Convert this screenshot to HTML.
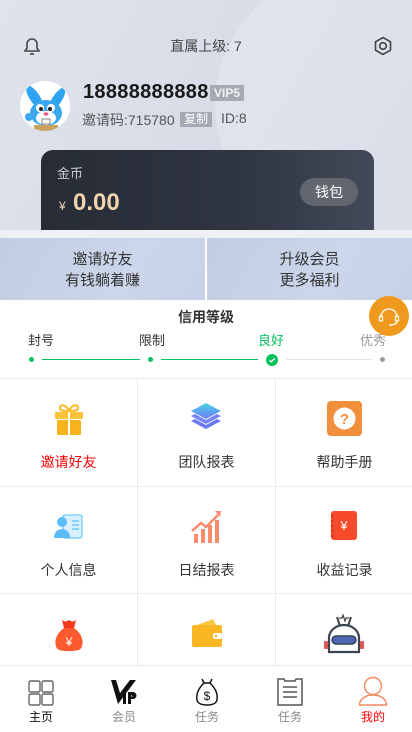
<!DOCTYPE html>
<html><head><meta charset="utf-8"><style>
*{margin:0;padding:0;box-sizing:border-box}
body{width:412px;height:732px;overflow:hidden;position:relative;background:#fff;font-family:"Liberation Sans","Noto Sans CJK SC",sans-serif;color:#333}
.a{position:absolute}
.hdr{left:0;top:0;width:412px;height:238px;background:linear-gradient(120deg,#dfe3ec 0%,#d6dbe6 60%,#cfd5e1 100%);overflow:hidden}
.hdr:after{content:"";position:absolute;left:215px;top:-60px;width:420px;height:330px;border-radius:50%;background:rgba(255,255,255,.22)}
.card{left:41px;top:150px;width:333px;height:82px;border-radius:12px 12px 0 0;background:linear-gradient(90deg,#272c36,#2f3541 60%,#424a59)}
.ban{top:238px;height:62px;width:205px;background:linear-gradient(120deg,#c3cde2,#ccd6ea 60%,#c6d1e8);text-align:center;font-size:15px;line-height:21px;color:#333;padding-top:11px}
.cell{position:absolute;width:137px;text-align:center;font-size:14px;color:#333}
.hl{position:absolute;left:0;width:412px;height:1px;background:#ebebeb}
.vl{position:absolute;top:378px;width:1px;height:287px;background:#ebebeb}
.tab{position:absolute;top:672px;width:60px;text-align:center;font-size:12px}
</style></head><body>
<div class="a hdr"></div>
<!-- bell -->
<svg class="a" style="left:21px;top:35px" width="22" height="22" viewBox="0 0 22 22" fill="none" stroke="#444" stroke-width="1.6"><path d="M4 16h14l-2-3V9a5 5 0 0 0-10 0v4z"/><path d="M9 19h4"/></svg>
<div class="a" style="left:0;width:412px;top:36px;text-align:center;font-size:14px;color:#444">直属上级: 7</div>
<svg class="a" style="left:372px;top:35px" width="22" height="22" viewBox="0 0 22 22" fill="none" stroke="#444" stroke-width="1.6"><path d="M11 2.5l7.5 4.3v8.4L11 19.5 3.5 15.2V6.8z"/><circle cx="11" cy="11" r="3.3"/></svg>
<!-- avatar -->
<div class="a" style="left:20px;top:81px;width:50px;height:50px;border-radius:50%;background:#fff;overflow:hidden">
<svg width="50" height="50" viewBox="0 0 50 50"><path d="M8 4c6 2 12 10 14 16L14 24C8 16 4 10 8 4z" fill="#2ea3f2"/><path d="M44 6c-6 2-12 10-14 16l8 3c6-8 9-14 6-19z" fill="#2ea3f2"/><ellipse cx="26" cy="32" rx="16" ry="13" fill="#3aa7ef"/><ellipse cx="26" cy="37" rx="10" ry="7" fill="#fff"/><circle cx="20" cy="27" r="4" fill="#fff"/><circle cx="31" cy="27" r="4" fill="#fff"/><circle cx="21" cy="28" r="2" fill="#222"/><circle cx="30" cy="28" r="2" fill="#222"/><ellipse cx="26" cy="33" rx="2.5" ry="1.8" fill="#e75b7f"/><rect x="22" y="38" width="8" height="5" fill="#fff" stroke="#333" stroke-width=".6"/><path d="M14 44h24v6H14z" fill="#c9a25d"/><circle cx="9" cy="36" r="4" fill="#3aa7ef"/></svg></div>
<div class="a" style="left:83px;top:81px;font-size:20px;font-weight:bold;color:#1a1a1a;letter-spacing:.3px">18888888888</div>
<div class="a" style="left:210px;top:85px;width:34px;height:16px;background:#a4a9b3;color:#f3f3f3;font-size:12px;font-weight:bold;text-align:center;line-height:16px">VIP5</div>
<div class="a" style="left:82px;top:110px;font-size:14px;color:#555">邀请码:715780</div>
<div class="a" style="left:180px;top:112px;width:32px;height:15px;background:#a4a9b3;color:#fff;font-size:12px;text-align:center;line-height:15px">复制</div>
<div class="a" style="left:221px;top:110px;font-size:14px;color:#555">ID:8</div>
<div class="a card"></div>
<div class="a" style="left:57px;top:163px;font-size:13px;color:#c8cad0">金币</div>
<div class="a" style="left:59px;top:199px;font-size:12px;color:#f2d3b0">¥</div>
<div class="a" style="left:73px;top:189px;font-size:24px;font-weight:bold;color:#f2d3b0">0.00</div>
<div class="a" style="left:300px;top:178px;width:58px;height:28px;border-radius:14px;background:#62666f;color:#fff;font-size:14px;text-align:center;line-height:28px">钱包</div>
<div class="a" style="left:0;top:230px;width:412px;height:8px;background:#eef0f3"></div>
<div class="a ban" style="left:0">邀请好友<br>有钱躺着赚</div>
<div class="a ban" style="left:207px">升级会员<br>更多福利</div>
<!-- credit -->
<div class="a" style="left:0;width:412px;top:307px;text-align:center;font-size:14px;font-weight:bold;color:#333">信用等级</div>
<div class="a" style="left:28px;top:330px;font-size:13px;color:#333">封号</div>
<div class="a" style="left:139px;top:330px;font-size:13px;color:#333">限制</div>
<div class="a" style="left:258px;top:330px;font-size:13px;color:#07c160">良好</div>
<div class="a" style="left:360px;top:330px;font-size:13px;color:#999">优秀</div>
<div class="a" style="left:29px;top:357px;width:5px;height:5px;border-radius:50%;background:#07c160"></div>
<div class="a" style="left:42px;top:359px;width:98px;height:1px;background:#07c160"></div>
<div class="a" style="left:148px;top:357px;width:5px;height:5px;border-radius:50%;background:#07c160"></div>
<div class="a" style="left:161px;top:359px;width:97px;height:1px;background:#07c160"></div>
<svg class="a" style="left:266px;top:354px" width="12" height="12" viewBox="0 0 12 12"><circle cx="6" cy="6" r="6" fill="#07c160"/><path d="M3.5 6.2l1.8 1.6 3.3-3.3" stroke="#fff" stroke-width="1.3" fill="none"/></svg>
<div class="a" style="left:286px;top:359px;width:86px;height:1px;background:#e5e5e5"></div>
<div class="a" style="left:380px;top:357px;width:5px;height:5px;border-radius:50%;background:#999"></div>
<div class="a" style="left:369px;top:296px;width:40px;height:40px;border-radius:50%;background:#ef9a1e"></div>
<svg class="a" style="left:377px;top:304px" width="24" height="24" viewBox="0 0 24 24" fill="none" stroke="#fff" stroke-width="1.3"><path d="M4 13a8 8 0 0 1 16 0"/><rect x="2.5" y="12" width="3" height="5" rx="1"/><rect x="18.5" y="12" width="3" height="5" rx="1"/><path d="M20 17c0 3-4 4-8 4"/></svg>
<!-- grid -->
<div class="hl" style="top:378px"></div><div class="hl" style="top:486px"></div><div class="hl" style="top:593px"></div><div class="hl" style="top:665px"></div>
<div class="vl" style="left:137px"></div><div class="vl" style="left:275px"></div>
<svg class="a" style="left:53px;top:402px" width="32" height="34" viewBox="0 0 32 34"><path d="M16 9c-3-7-9-7-9-3 0 3 5 3 9 3zm0 0c3-7 9-7 9-3 0 3-5 3-9 3z" fill="none" stroke="#fbbf34" stroke-width="2.2"/><rect x="2" y="10" width="28" height="7" rx="1.5" fill="#fbc23a"/><rect x="4" y="18" width="24" height="15" rx="1.5" fill="#f8b31c"/><rect x="15" y="10" width="2" height="23" fill="#fff"/></svg>
<svg class="a" style="left:189px;top:400px" width="34" height="36" viewBox="0 0 34 36"><defs><linearGradient id="g1" x1="0" y1="0" x2="0" y2="1"><stop offset="0" stop-color="#4dd2e8"/><stop offset="1" stop-color="#6a7cf5"/></linearGradient></defs><path d="M17 24L2 16l4-2 11 6 11-6 4 2z" fill="#7384f6"/><path d="M17 29L2 21l4-2 11 6 11-6 4 2z" fill="#6a78f5"/><path d="M17 19L2 11 17 3l15 8z" fill="url(#g1)"/></svg>
<svg class="a" style="left:327px;top:401px" width="35" height="35" viewBox="0 0 35 35"><rect x="0" y="0" width="35" height="35" rx="4" fill="#f28f3b"/><circle cx="17.5" cy="17.5" r="11" fill="#fff"/><text x="17.5" y="23" text-anchor="middle" font-size="15" font-weight="bold" fill="#f28f3b" font-family="Liberation Sans">?</text></svg>
<div class="cell" style="left:0;top:452px;color:#f00">邀请好友</div>
<div class="cell" style="left:138px;top:452px">团队报表</div>
<div class="cell" style="left:276px;top:452px">帮助手册</div>
<svg class="a" style="left:54px;top:514px" width="29" height="25" viewBox="0 0 29 25"><rect x="9" y="1" width="19" height="23" rx="2" fill="#d7efff" stroke="#6bc6fb" stroke-width="1.2"/><path d="M18 7h7M18 11h7M18 15h7" stroke="#6bc6fb" stroke-width="1.5"/><circle cx="8" cy="8" r="5" fill="#5bbcf8"/><path d="M0 24c0-6 4-9 8-9s8 3 8 9z" fill="#5bbcf8"/></svg>
<svg class="a" style="left:191px;top:509px" width="32" height="34" viewBox="0 0 32 34"><g fill="#fb8a6a"><rect x="3" y="25" width="4" height="9"/><rect x="10" y="20" width="4" height="14"/><rect x="17" y="16" width="4" height="18"/><rect x="24" y="11" width="4" height="23"/></g><path d="M1 22l9-8 5 4 12-12" stroke="#fb8a6a" stroke-width="2.4" fill="none"/><path d="M24 2l6 0-1 6z" fill="#fb8a6a"/></svg>
<svg class="a" style="left:330px;top:511px" width="27" height="30" viewBox="0 0 27 30"><rect x="1" y="0" width="26" height="29" rx="3" fill="#f64a2a"/><path d="M1 5h2M1 10h2M1 15h2M1 20h2M1 25h2" stroke="#c22" stroke-width="1.5"/><text x="14" y="19" text-anchor="middle" font-size="13" fill="#fff" font-family="Liberation Sans">¥</text></svg>
<div class="cell" style="left:0;top:560px">个人信息</div>
<div class="cell" style="left:138px;top:560px">日结报表</div>
<div class="cell" style="left:276px;top:560px">收益记录</div>
<svg class="a" style="left:54px;top:618px" width="30" height="34" viewBox="0 0 30 34"><path d="M8 2c3 2 4 2 7 0 3 2 4 2 7 0l-2 8H10z" fill="#f43a1c"/><path d="M10 10h10c7 5 10 12 8 18-1 4-4 5-13 5S3 32 2 28c-2-6 1-13 8-18z" fill="#fa5a2e"/><text x="15" y="28" text-anchor="middle" font-size="12" fill="#fff" font-family="Liberation Sans">¥</text></svg>
<svg class="a" style="left:191px;top:618px" width="31" height="30" viewBox="0 0 31 30"><path d="M6 7l16-6 3 6z" fill="#fcc844"/><rect x="1" y="7" width="30" height="22" rx="2" fill="#f9b823"/><rect x="22" y="15" width="9" height="6" rx="2" fill="#fff"/><circle cx="25" cy="18" r="1.3" fill="#f9b823"/></svg>
<svg class="a" style="left:321px;top:614px" width="46" height="40" viewBox="0 0 46 40"><path d="M16 3l3 9M30 3l-3 9" stroke="#444" stroke-width="2"/><path d="M18 4h3l1-3 2 6 1-3h3" stroke="#444" stroke-width="1.2" fill="none"/><path d="M8 38V24a15 13 0 0 1 30 0v14z" fill="#fff" stroke="#3d4452" stroke-width="2.2"/><rect x="11" y="22" width="24" height="8" rx="4" fill="#4a67b5" stroke="#3d4452" stroke-width="1.5"/><rect x="3" y="27" width="4" height="8" rx="1" fill="#e2555a"/><rect x="39" y="27" width="4" height="8" rx="1" fill="#e2555a"/></svg>
<!-- tab bar -->
<div class="a" style="left:0;top:666px;width:412px;height:66px;background:#fff"></div>
<svg class="a" style="left:28px;top:680px" width="26" height="26" viewBox="0 0 26 26" fill="none" stroke="#666" stroke-width="1.4"><rect x="1" y="1" width="11" height="11" rx="1.5"/><rect x="14" y="1" width="11" height="11" rx="1.5"/><rect x="1" y="14" width="11" height="11" rx="1.5"/><rect x="14" y="14" width="11" height="11" rx="1.5"/></svg>
<svg class="a" style="left:110px;top:679px" width="28" height="26" viewBox="0 0 28 26"><path d="M1 1h5l4 13L20 1h6L8 25z" fill="#111"/><rect x="13" y="13" width="3" height="12" fill="#111"/><path d="M18 13h5a3.5 3.5 0 0 1 0 7h-2v5h-3zM21 16v1.5h2" fill="#111"/></svg>
<svg class="a" style="left:195px;top:677px" width="24" height="30" viewBox="0 0 24 30" fill="none" stroke="#111" stroke-width="1.5"><path d="M7 2l2 4h6l2-4M9 6C4 11 1 16 2 23c1 4 5 5 10 5s9-1 10-5c1-7-2-12-7-17"/><text x="12" y="23" text-anchor="middle" font-size="12" fill="#111" stroke="none" font-family="Liberation Sans">$</text></svg>
<svg class="a" style="left:277px;top:677px" width="26" height="29" viewBox="0 0 26 29" fill="none" stroke="#555" stroke-width="1.5"><path d="M1 2h6l1 2h10l1-2h6v26H1z"/><path d="M6 10h14M6 15h14M6 20h14"/></svg>
<svg class="a" style="left:358px;top:676px" width="30" height="30" viewBox="0 0 30 30" fill="none" stroke="#f2885e" stroke-width="1.4"><circle cx="15" cy="10" r="8.5"/><path d="M1.5 29c0-6 6-10 13.5-10S28.5 23 28.5 29z"/></svg>
<div class="tab" style="left:11px;top:708px;color:#111">主页</div>
<div class="tab" style="left:94px;top:708px;color:#888">会员</div>
<div class="tab" style="left:177px;top:708px;color:#888">任务</div>
<div class="tab" style="left:260px;top:708px;color:#888">任务</div>
<div class="tab" style="left:343px;top:708px;color:#f00">我的</div>
</body></html>
